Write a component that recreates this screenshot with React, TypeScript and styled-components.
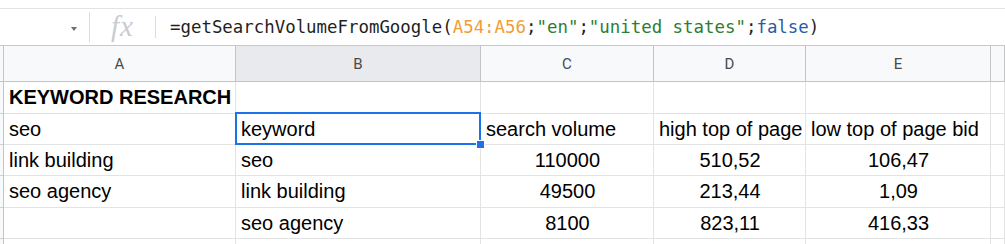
import styled, { createGlobalStyle } from 'styled-components';

const GlobalStyle = createGlobalStyle`
  html, body {
    margin: 0;
    padding: 0;
    background: #ffffff;
    overflow: hidden;
  }
  * {
    box-sizing: border-box;
  }
`;

const columns = [
  { key: 'A', width: 232 },
  { key: 'B', width: 245 },
  { key: 'C', width: 173 },
  { key: 'D', width: 152 },
  { key: 'E', width: 185 },
];

type CellData = {
  text: string;
  bold?: boolean;
  center?: boolean;
  selected?: boolean;
};

const rows: CellData[][] = [
  [{ text: 'KEYWORD RESEARCH', bold: true }, { text: '' }, { text: '' }, { text: '' }, { text: '' }],
  [
    { text: 'seo' },
    { text: 'keyword', selected: true },
    { text: 'search volume' },
    { text: 'high top of page' },
    { text: 'low top of page bid' },
  ],
  [
    { text: 'link building' },
    { text: 'seo' },
    { text: '110000', center: true },
    { text: '510,52', center: true },
    { text: '106,47', center: true },
  ],
  [
    { text: 'seo agency' },
    { text: 'link building' },
    { text: '49500', center: true },
    { text: '213,44', center: true },
    { text: '1,09', center: true },
  ],
  [
    { text: '' },
    { text: 'seo agency' },
    { text: '8100', center: true },
    { text: '823,11', center: true },
    { text: '416,33', center: true },
  ],
  [{ text: '' }, { text: '' }, { text: '' }, { text: '' }, { text: '' }],
];

const Page = styled.div`
  width: 1005px;
  height: 244px;
  overflow: hidden;
  background: #ffffff;
`;

const TopStrip = styled.div`
  height: 9px;
  border-bottom: 1px solid #e3e3e3;
`;

const FormulaBar = styled.div`
  height: 37px;
  display: flex;
  align-items: center;
  border-bottom: 1px solid #c9c9c9;
`;

const NameBox = styled.div`
  width: 89px;
  height: 100%;
  display: flex;
  align-items: center;
  justify-content: flex-end;
  padding-right: 12px;
`;

const DropArrow = styled.div`
  width: 0;
  height: 0;
  margin-top: 4px;
  border-left: 3px solid transparent;
  border-right: 3px solid transparent;
  border-top: 4px solid #6b6f73;
`;

const Divider = styled.div<{ $h: number }>`
  width: 1px;
  height: ${(p) => p.$h}px;
  background: #dadce0;
`;

const FxLabel = styled.div`
  width: 65px;
  display: flex;
  justify-content: center;
  font-family: 'Liberation Serif', 'DejaVu Serif', serif;
  font-style: italic;
  font-size: 29px;
  color: #c9cccf;
  letter-spacing: 1px;
  padding-bottom: 2px;
`;

const FormulaText = styled.div`
  padding-left: 14px;
  font-family: 'DejaVu Sans Mono', 'Liberation Mono', monospace;
  font-size: 17.4px;
  color: #1f1f1f;
  white-space: nowrap;
  padding-bottom: 1px;
`;

const Token = styled.span<{ $kind: 'range' | 'string' | 'bool' }>`
  color: ${(p) =>
    p.$kind === 'range' ? '#f09d38' : p.$kind === 'string' ? '#2b7d34' : '#2a5ba8'};
`;

const Grid = styled.div`
  display: grid;
  grid-template-columns: 4px ${columns.map((c) => `${c.width}px`).join(' ')} 1fr;
  grid-template-rows: 36px 32px 31px 31px 32px 31px 20px;
`;

const Corner = styled.div`
  background: #f8f9fa;
  border-right: 1px solid #c4c4c4;
  border-bottom: 1px solid #c4c4c4;
`;

const ColHeader = styled.div<{ $active?: boolean }>`
  background: ${(p) => (p.$active ? '#e8eaed' : '#f8f9fa')};
  border-right: 1px solid #c4c4c4;
  border-bottom: 1px solid #c4c4c4;
  display: flex;
  align-items: center;
  justify-content: center;
  font-family: Roboto, 'Liberation Sans', Arial, sans-serif;
  font-size: 15px;
  color: #4a4a4a;
`;

const RowHead = styled.div`
  background: #f8f9fa;
  border-right: 1px solid #c4c4c4;
  border-bottom: 1px solid #d0d0d0;
`;

const Cell = styled.div<{ $bold?: boolean; $center?: boolean; $selected?: boolean }>`
  position: relative;
  border-right: 1px solid #e2e3e3;
  border-bottom: 1px solid #e2e3e3;
  display: flex;
  align-items: center;
  justify-content: ${(p) => (p.$center ? 'center' : 'flex-start')};
  padding: 0 4px 0 5px;
  font-family: 'Liberation Sans', Arial, sans-serif;
  font-size: 20px;
  font-weight: ${(p) => (p.$bold ? 700 : 400)};
  color: #000000;
  white-space: nowrap;
  overflow: visible;
  z-index: ${(p) => (p.$selected ? 5 : p.$bold ? 1 : 0)};
`;

const Selection = styled.div`
  position: absolute;
  top: -2px;
  left: -1px;
  right: -1px;
  bottom: -1px;
  border: 2px solid #1a73e8;
  pointer-events: none;
`;

const FillHandle = styled.div`
  position: absolute;
  right: -6px;
  bottom: -6px;
  width: 9px;
  height: 9px;
  background: #1a73e8;
  border: 1px solid #ffffff;
`;

export default function App() {
  return (
    <Page>
      <GlobalStyle />
      <TopStrip />
      <FormulaBar>
        <NameBox>
          <DropArrow />
        </NameBox>
        <Divider $h={30} />
        <FxLabel>fx</FxLabel>
        <Divider $h={22} />
        <FormulaText>
          =getSearchVolumeFromGoogle(<Token $kind="range">A54:A56</Token>;
          <Token $kind="string">"en"</Token>;<Token $kind="string">"united states"</Token>;
          <Token $kind="bool">false</Token>)
        </FormulaText>
      </FormulaBar>
      <Grid>
        <Corner />
        {columns.map((c) => (
          <ColHeader key={c.key} $active={c.key === 'B'}>
            {c.key}
          </ColHeader>
        ))}
        <ColHeader />
        {rows.map((row, ri) => (
          <>
            <RowHead key={`h${ri}`} />
            {row.map((cell, ci) => (
              <Cell
                key={`${ri}-${ci}`}
                $bold={cell.bold}
                $center={cell.center}
                $selected={cell.selected}
              >
                {cell.text}
                {cell.selected && (
                  <Selection>
                    <FillHandle />
                  </Selection>
                )}
              </Cell>
            ))}
            <Cell key={`f${ri}`} />
          </>
        ))}
      </Grid>
    </Page>
  );
}
